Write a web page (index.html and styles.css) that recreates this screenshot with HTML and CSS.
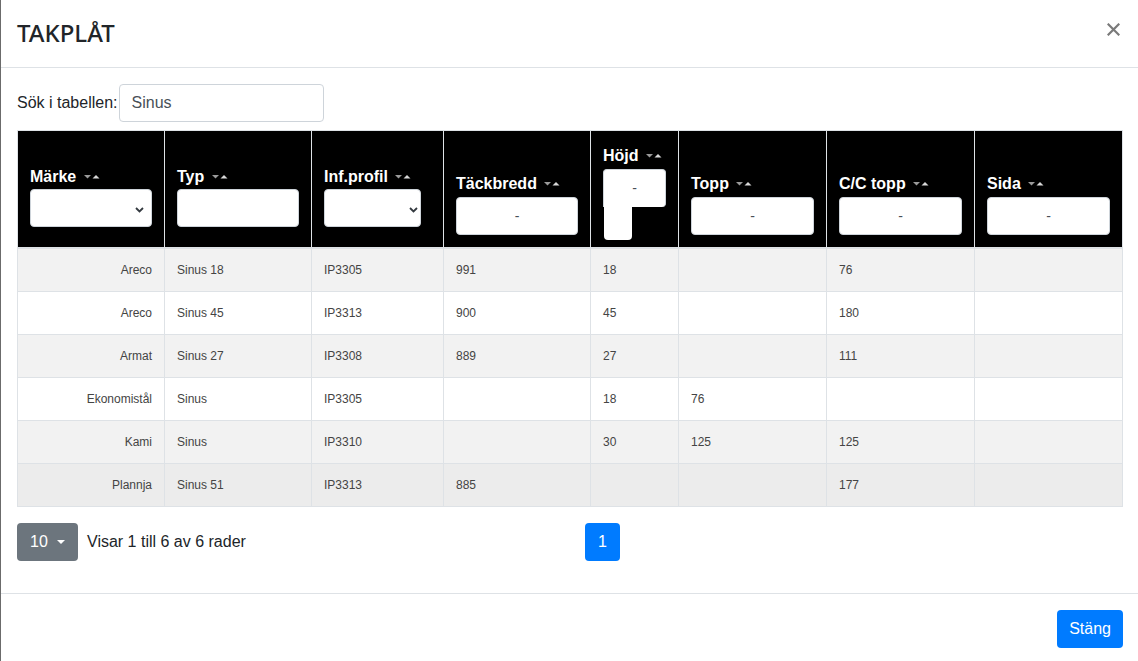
FILE: index.html
```html
<!DOCTYPE html>
<html lang="sv">
<head>
<meta charset="utf-8">
<title>Takplåt</title>
<link rel="stylesheet" href="styles.css">
</head>
<body>
<div class="modal">
  <div class="modal-header">
    <h4 class="modal-title">TAKPLÅT</h4>
    <button class="close" type="button" aria-label="Stäng">
      <svg width="13" height="13" viewBox="0 0 13 13"><path d="M1.5 1.5 L11.5 11.5 M11.5 1.5 L1.5 11.5" stroke="#7a7a7a" stroke-width="2.2" stroke-linecap="square" fill="none"/></svg>
    </button>
  </div>

  <div class="modal-body">
    <div class="toolbar">
      <span class="search-label">Sök i tabellen:</span>
      <div class="search-input">Sinus</div>
    </div>

    <table class="data">
      <colgroup>
        <col class="c147"><col class="c147"><col class="c132"><col class="c147"><col class="c88"><col class="c148"><col class="c148"><col>
      </colgroup>
      <thead>
        <tr>
          <th class="th-sel">
            <div class="th-label">Märke <svg class="sort" width="16" height="4" viewBox="0 0 16 4"><path d="M0 0 H7 L3.5 3.5 Z" fill="#9a9a9a"/><path d="M8.5 3.5 H15.5 L12 0 Z" fill="#d8d8d8"/></svg></div>
            <div class="fc fc-select"><svg width="9" height="6" viewBox="0 0 9 6"><path d="M1 1 L4.5 4.5 L8 1" stroke="#343a40" stroke-width="1.8" fill="none"/></svg></div>
          </th>
          <th class="th-sel">
            <div class="th-label">Typ <svg class="sort" width="16" height="4" viewBox="0 0 16 4"><path d="M0 0 H7 L3.5 3.5 Z" fill="#9a9a9a"/><path d="M8.5 3.5 H15.5 L12 0 Z" fill="#d8d8d8"/></svg></div>
            <div class="fc"></div>
          </th>
          <th class="th-sel">
            <div class="th-label">Inf.profil <svg class="sort" width="16" height="4" viewBox="0 0 16 4"><path d="M0 0 H7 L3.5 3.5 Z" fill="#9a9a9a"/><path d="M8.5 3.5 H15.5 L12 0 Z" fill="#d8d8d8"/></svg></div>
            <div class="fc fc-select fc-narrow"><svg width="9" height="6" viewBox="0 0 9 6"><path d="M1 1 L4.5 4.5 L8 1" stroke="#343a40" stroke-width="1.8" fill="none"/></svg></div>
          </th>
          <th>
            <div class="th-label">Täckbredd <svg class="sort" width="16" height="4" viewBox="0 0 16 4"><path d="M0 0 H7 L3.5 3.5 Z" fill="#9a9a9a"/><path d="M8.5 3.5 H15.5 L12 0 Z" fill="#d8d8d8"/></svg></div>
            <div class="fc">-</div>
          </th>
          <th class="th-top">
            <div class="th-label">Höjd <svg class="sort" width="16" height="4" viewBox="0 0 16 4"><path d="M0 0 H7 L3.5 3.5 Z" fill="#9a9a9a"/><path d="M8.5 3.5 H15.5 L12 0 Z" fill="#d8d8d8"/></svg></div>
            <div class="fc fc-split">-</div>
            <div class="fc-tail"></div>
          </th>
          <th>
            <div class="th-label">Topp <svg class="sort" width="16" height="4" viewBox="0 0 16 4"><path d="M0 0 H7 L3.5 3.5 Z" fill="#9a9a9a"/><path d="M8.5 3.5 H15.5 L12 0 Z" fill="#d8d8d8"/></svg></div>
            <div class="fc">-</div>
          </th>
          <th>
            <div class="th-label">C/C topp <svg class="sort" width="16" height="4" viewBox="0 0 16 4"><path d="M0 0 H7 L3.5 3.5 Z" fill="#9a9a9a"/><path d="M8.5 3.5 H15.5 L12 0 Z" fill="#d8d8d8"/></svg></div>
            <div class="fc">-</div>
          </th>
          <th>
            <div class="th-label">Sida <svg class="sort" width="16" height="4" viewBox="0 0 16 4"><path d="M0 0 H7 L3.5 3.5 Z" fill="#9a9a9a"/><path d="M8.5 3.5 H15.5 L12 0 Z" fill="#d8d8d8"/></svg></div>
            <div class="fc">-</div>
          </th>
        </tr>
      </thead>
      <tbody>
        <tr class="odd"><td class="right">Areco</td><td>Sinus 18</td><td>IP3305</td><td>991</td><td>18</td><td></td><td>76</td><td></td></tr>
        <tr><td class="right">Areco</td><td>Sinus 45</td><td>IP3313</td><td>900</td><td>45</td><td></td><td>180</td><td></td></tr>
        <tr class="odd"><td class="right">Armat</td><td>Sinus 27</td><td>IP3308</td><td>889</td><td>27</td><td></td><td>111</td><td></td></tr>
        <tr><td class="right">Ekonomistål</td><td>Sinus</td><td>IP3305</td><td></td><td>18</td><td>76</td><td></td><td></td></tr>
        <tr class="odd"><td class="right">Kami</td><td>Sinus</td><td>IP3310</td><td></td><td>30</td><td>125</td><td>125</td><td></td></tr>
        <tr class="hover"><td class="right">Plannja</td><td>Sinus 51</td><td>IP3313</td><td>885</td><td></td><td></td><td>177</td><td></td></tr>
      </tbody>
    </table>

    <div class="pager">
      <div class="pager-detail">
        <div class="btn-size"><span>10</span><span class="caret"></span></div>
        <span class="pager-text">Visar 1 till 6 av 6 rader</span>
      </div>
      <div class="page-btn">1</div>
    </div>
  </div>

  <div class="modal-footer">
    <button class="btn-primary" type="button">Stäng</button>
  </div>
</div>
</body>
</html>
```

FILE: styles.css
```css
* {
  box-sizing: border-box;
}

html,
body {
  margin: 0;
  padding: 0;
  overflow: hidden;
  background: #fff;
}

body {
  font-family: "Liberation Sans", Arial, sans-serif;
  font-size: 16px;
  line-height: 1.5;
  color: #212529;
}

.modal {
  width: 1139px;
  border-left: 1px solid #6b6b6b;
  background: #fff;
  display: flex;
  flex-direction: column;
}

.modal-header {
  display: flex;
  align-items: flex-start;
  justify-content: space-between;
  padding: 15px 16px 16px 16px;
  border-bottom: 1px solid #dee2e6;
}

.modal-title {
  margin: 0;
  font-family: "Noto Sans", "Liberation Sans", sans-serif;
  font-size: 24px;
  font-weight: 500;
  line-height: 36px;
  color: #212529;
}

.close {
  background: none;
  border: 0;
  padding: 0;
  margin: 8px 3px 0 0;
  width: 13px;
  height: 13px;
  display: block;
}

.close svg {
  display: block;
}

.modal-body {
  padding: 16px;
}

.toolbar {
  display: flex;
  align-items: center;
  height: 38px;
  margin-bottom: 8px;
}

.search-label {
  margin-right: 1px;
}

.search-input {
  width: 205px;
  height: 38px;
  border: 1px solid #ced4da;
  border-radius: 4px;
  padding: 6px 12px;
  color: #495057;
  line-height: 24px;
}

.data {
  width: 100%;
  border-collapse: collapse;
  table-layout: fixed;
}

.c147 { width: 147px; }
.c132 { width: 132px; }
.c88 { width: 88px; }
.c148 { width: 148px; }

.data th {
  background: #000;
  color: #fff;
  font-weight: 700;
  text-align: left;
  vertical-align: bottom;
  padding: 12px;
  border: 1px solid #dee2e6;
  border-bottom-width: 2px;
  white-space: nowrap;
}

.th-label {
  line-height: 24px;
  margin-bottom: 1px;
}

.sort {
  margin-left: 3px;
  vertical-align: 3px;
}

.data th.th-sel {
  padding-bottom: 20px;
}

.th-sel .th-label {
  margin-bottom: 0;
}

.data th.th-top {
  vertical-align: top;
  padding-top: 13px;
  padding-bottom: 7px;
}

.fc {
  height: 38px;
  background: #fff;
  border: 1px solid #ced4da;
  border-radius: 4px;
  display: flex;
  align-items: center;
  justify-content: center;
  color: #495057;
  font-size: 14px;
  font-weight: 400;
}

.fc-select {
  justify-content: flex-end;
  padding-right: 7px;
  padding-top: 3px;
}

.fc-select svg {
  display: block;
}

.fc-narrow {
  width: 97px;
  padding-right: 2px;
}

.fc-split {
  border-radius: 4px 4px 4px 0;
  border-bottom: 0;
}

.fc-tail {
  width: 28px;
  height: 33px;
  margin-left: 1px;
  background: #fff;
  border-radius: 0 0 4px 4px;
}

.data td {
  padding: 12px;
  font-size: 12px;
  line-height: 18px;
  color: #444;
  border: 1px solid #dee2e6;
  white-space: nowrap;
}

.data td.right {
  text-align: right;
}

.data tr.odd td {
  background: #f2f2f2;
}

.data tr.hover td {
  background: #ececec;
}

.pager {
  display: flex;
  align-items: center;
  margin: 16px 0 16px 0;
}

.pager-detail {
  width: 568px;
  display: flex;
  align-items: center;
}

.btn-size {
  width: 61px;
  height: 38px;
  background: #6c757d;
  color: #fff;
  border-radius: 4px;
  display: flex;
  align-items: center;
  padding-left: 13px;
}

.caret {
  margin-left: 9px;
  width: 0;
  height: 0;
  border-left: 4px solid transparent;
  border-right: 4px solid transparent;
  border-top: 4px solid #fff;
}

.pager-text {
  margin-left: 9px;
}

.page-btn {
  width: 35px;
  height: 38px;
  background: #007bff;
  color: #fff;
  border-radius: 4px;
  display: flex;
  align-items: center;
  justify-content: center;
}

.modal-footer {
  display: flex;
  justify-content: flex-end;
  padding: 16px 16px 16px 16px;
  border-top: 1px solid #dee2e6;
}

.btn-primary {
  font-family: inherit;
  font-size: 16px;
  line-height: 24px;
  padding: 7px 12px;
  background: #007bff;
  color: #fff;
  border: 0;
  border-radius: 4px;
}
```
